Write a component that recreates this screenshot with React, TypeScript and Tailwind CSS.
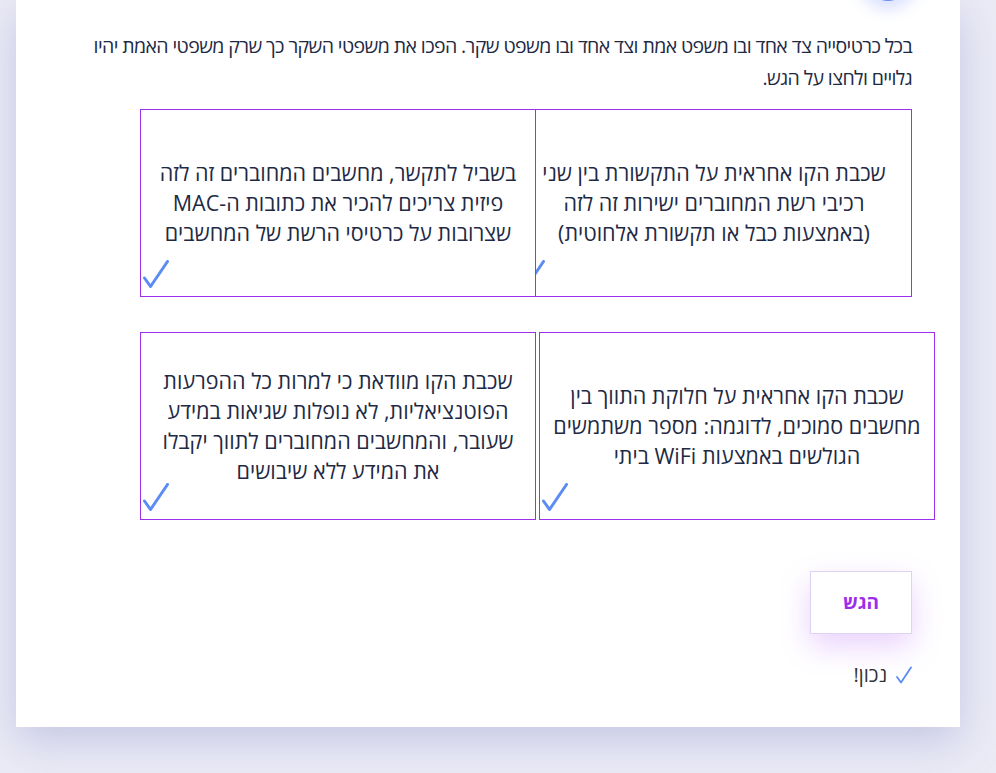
import React from "react";

function Check({ className }: { className?: string }) {
  return (
    <svg viewBox="0 0 26 28" className={className} fill="none">
      <path d="M1.5 18 L7.5 26.5 L24.5 1.5" stroke="#5b8cf5" strokeWidth="3" strokeLinecap="round" strokeLinejoin="round" />
    </svg>
  );
}

function Card({ text, className }: { text: string[]; className?: string }) {
  return (
    <div
      className={
        "relative w-[396px] h-[188px] shrink-0 bg-white border border-[#9b30e8] flex items-center justify-center px-3 " +
        (className ?? "")
      }
    >
      <div className="text-center text-[21.5px] leading-[30px] text-[#1e2a44] whitespace-nowrap">
        {text.map((t, i) => (
          <div key={i}>{t}</div>
        ))}
      </div>
      <Check className="absolute left-[2px] bottom-[8px] w-[26px] h-[28px]" />
    </div>
  );
}

export default function App() {
  return (
    <div
      className="min-h-screen w-full bg-[#ebebf6] overflow-hidden"
      style={{ fontFamily: '"Open Sans", "Noto Sans", "DejaVu Sans", sans-serif' }}
    >
      <div className="ml-[16px] w-[944px] h-[727px] bg-white shadow-[0_14px_40px_rgba(150,155,205,0.45)] relative">
        <div className="absolute left-[852px] top-[-40px] w-[40px] h-[41px] rounded-full bg-[#6a8cf7] shadow-[0_0_16px_8px_rgba(110,140,250,0.28)]" />
        <div dir="rtl" className="px-12 pt-[30px]">
          <p className="text-[19.5px] leading-[32px] text-[#1e2a44] tracking-[-0.6px]">
            בכל כרטיסייה צד אחד ובו משפט אמת וצד אחד ובו משפט שקר. הפכו את משפטי השקר כך שרק משפטי האמת יהיו גלויים ולחצו על הגש.
          </p>

          <div className="flex mt-[15px]">
            <Card text={["שכבת הקו אחראית על התקשורת בין שני", "רכיבי רשת המחוברים ישירות זה לזה", "(באמצעות כבל או תקשורת אלחוטית)"]} />
            <Card
              className="ms-[-20px]"
              text={["בשביל לתקשר, מחשבים המחוברים זה לזה", "פיזית צריכים להכיר את כתובות ה-MAC", "שצרובות על כרטיסי הרשת של המחשבים"]}
            />
          </div>

          <div className="flex mt-[35px] ms-[-23px] gap-[3px]">
            <Card text={["שכבת הקו אחראית על חלוקת התווך בין", "מחשבים סמוכים, לדוגמה: מספר משתמשים", "הגולשים באמצעות WiFi ביתי"]} />
            <Card
              text={["שכבת הקו מוודאת כי למרות כל ההפרעות", "הפוטנציאליות, לא נופלות שגיאות במידע", "שעובר, והמחשבים המחוברים לתווך יקבלו", "את המידע ללא שיבושים"]}
            />
          </div>

          <div className="flex mt-[51px]">
            <button className="w-[102px] h-[63px] bg-white border border-[#ddd4f3] text-[#9b2ee8] font-bold text-[19px] shadow-[0_12px_30px_rgba(175,90,245,0.28)]">
              הגש
            </button>
          </div>

          <div className="flex items-center gap-[9px] mt-[27px]">
            <svg viewBox="0 0 16 18" className="w-[16px] h-[18px]" fill="none">
              <path d="M1 11 L5 16.5 L15 1.5" stroke="#5b8cf5" strokeWidth="1.8" strokeLinecap="round" strokeLinejoin="round" />
            </svg>
            <span className="text-[20px] leading-[28px] text-[#333]">נכון!</span>
          </div>
        </div>
      </div>
    </div>
  );
}
